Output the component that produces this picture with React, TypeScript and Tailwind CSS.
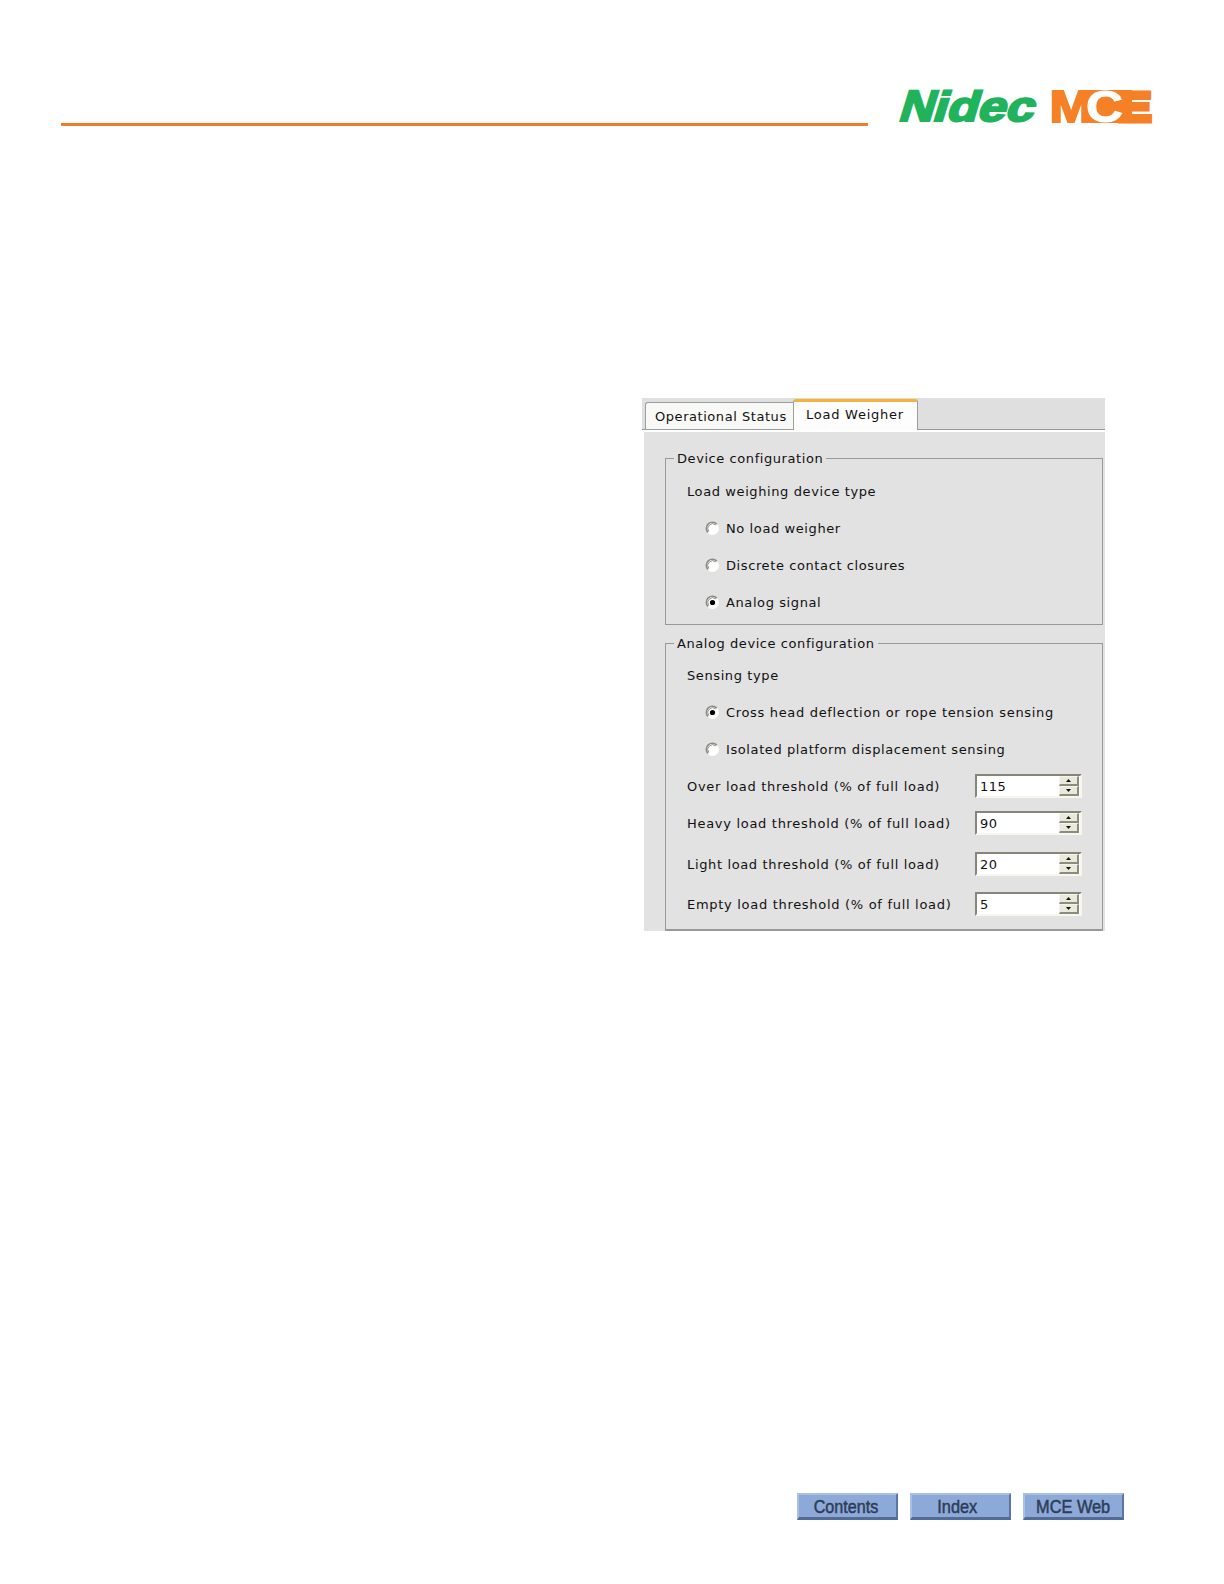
import { twMerge } from "tailwind-merge";

const ORANGE = "#f58026";
const GREEN = "#20b35c";

const NidecLogo = () => (
  <svg width="138" height="34" viewBox="0 0 138 34" className="overflow-visible" fill={GREEN}>
    <g
      transform="translate(0 33) skewX(-17)"
      fontFamily="Liberation Sans"
      fontWeight="bold"
      stroke={GREEN}
      strokeWidth="2.2"
    >
      <text x="-2" y="-0.6" fontSize="44" textLength="35" lengthAdjust="spacingAndGlyphs">N</text>
      <text x="32" y="-0.6" fontSize="42" textLength="101" lengthAdjust="spacingAndGlyphs">idec</text>
    </g>
  </svg>
);

const MceLogo = () => (
  <svg width="100" height="33" viewBox="0 0 100 33" className="overflow-visible" fontFamily="Liberation Sans" fontWeight="bold">
    <rect x="30" width="50" height="33" fill={ORANGE} />
    <text x="-2.5" y="32" fontSize="45" fill={ORANGE} stroke={ORANGE} strokeWidth="2" textLength="43" lengthAdjust="spacingAndGlyphs">M</text>
    <text x="66" y="30.5" fontSize="41" fill={ORANGE} stroke={ORANGE} strokeWidth="5" textLength="33" lengthAdjust="spacingAndGlyphs">E</text>
    <text x="34" y="32.2" fontSize="45" fill="#fff" stroke="#fff" strokeWidth="1" textLength="37" lengthAdjust="spacingAndGlyphs">C</text>
  </svg>
);

interface RadioProps {
  label: string;
  checked?: boolean;
  className?: string;
}

const Radio = ({ label, checked = false, className }: RadioProps) => (
  <div className={twMerge("flex h-[37px] items-center pl-[39px] tracking-[0.6px]", className)}>
    <svg width="15" height="15" viewBox="0 0 15 15" className="mr-[6px] shrink-0">
      <circle cx="7.5" cy="7.5" r="6.5" fill="#fff" />
      <path d="M3 11.5A6 6 0 0 1 11.8 3.2" fill="none" stroke="#8c8c84" strokeWidth="1.6" />
      <path d="M3.8 10.5A4.8 4.8 0 0 1 10.8 4" fill="none" stroke="#55554f" strokeWidth="0.6" />
      {checked && <circle cx="7.5" cy="7.5" r="2.6" fill="#000" />}
    </svg>
    <span className="pt-px">{label}</span>
  </div>
);

const SpinButton = ({ up = false }: { up?: boolean }) => (
  <div className="flex h-[10px] w-[20px] items-center justify-center border-t border-l border-r-2 border-b-2 border-t-[#f5f5ea] border-l-[#f5f5ea] border-r-[#8c8c7c] border-b-[#8c8c7c] bg-[#e9e9dc]">
    <svg width="5" height="3" viewBox="0 0 5 3">
      <path d={up ? "M0 3L2.5 0L5 3Z" : "M0 0L5 0L2.5 3Z"} fill="#111" />
    </svg>
  </div>
);

interface ThresholdProps {
  label: string;
  value: number;
  className?: string;
}

const Threshold = ({ label, value, className }: ThresholdProps) => (
  <div className={twMerge("flex h-[24px] items-center pl-[21px] tracking-[0.7px]", className)}>
    <span className="w-[288px] pt-[2px]">{label}</span>
    <div className="flex h-[24px] w-[107px] items-center justify-between border-2 border-t-[#85857a] border-l-[#85857a] border-r-[#f7f7ef] border-b-[#f7f7ef] bg-white pr-px pl-[3px]">
      <span className="pt-px tracking-[0.5px]">{value}</span>
      <div className="flex flex-col">
        <SpinButton up />
        <SpinButton />
      </div>
    </div>
  </div>
);

interface NavButtonProps {
  label: string;
  className?: string;
}

const NavButton = ({ label, className }: NavButtonProps) => (
  <button
    className="flex h-[27px] w-[101px] items-center justify-center border-t-2 border-l-2 border-r-2 border-b-3 border-t-[#a9c0e4] border-l-[#a9c0e4] border-r-[#5b76a6] border-b-[#526b99] bg-[#8ca9d7]"
  >
    <span className={twMerge("whitespace-nowrap font-['Liberation_Sans'] text-[19px] leading-none text-[#2d3d57] [-webkit-text-stroke:0.5px_#2d3d57]", className)}>
      {label}
    </span>
  </button>
);

const LoadWeigherPanel = () => (
  <div className="h-[533px] w-[463px] overflow-hidden bg-[#e2e2e2] font-['DejaVu_Sans',sans-serif] text-[13px] leading-[16px] whitespace-nowrap text-[#111]">
    <div className="flex h-[32px] items-end bg-[#dfdfdf]">
      <div className="h-px w-[3px] bg-[#999]" />
      <div className="flex h-[28px] w-[148px] items-center rounded-tl-[3px] border-t border-b border-l border-[#999fa0] bg-[#f8f9f6] pl-[9px]">
        <span className="pt-px tracking-[0.55px]">Operational Status</span>
      </div>
      <div className="flex h-[31px] w-[125px] items-center rounded-t-[3px] border-t-[3px] border-r border-l border-t-[#f3b33c] border-r-[#999fa0] border-l-[#999fa0] bg-[#fdfdfd] pb-[3px] pl-[12px]">
        <span className="tracking-[0.75px]">Load Weigher</span>
      </div>
      <div className="h-px flex-1 bg-[#999]" />
    </div>
    <div className="h-[501px] border-t-2 border-l-2 border-white pt-[18px] pl-[21px]">
      <fieldset className="h-[175px] w-[438px] border border-[#999]">
        <legend className="ml-[8px] h-[16px] px-[3px] pt-px tracking-[0.57px]">Device configuration</legend>
        <div className="pt-[18px] pl-[21px] tracking-[0.6px]">Load weighing device type</div>
        <Radio label="No load weigher" className="mt-[10px]" />
        <Radio label="Discrete contact closures" />
        <Radio label="Analog signal" checked />
      </fieldset>
      <fieldset className="mt-[10px] h-[296px] w-[438px] border border-b-2 border-[#999]">
        <legend className="ml-[8px] h-[16px] px-[3px] pt-px tracking-[0.57px]">Analog device configuration</legend>
        <div className="pt-[17px] pl-[21px] tracking-[0.6px]">Sensing type</div>
        <Radio label="Cross head deflection or rope tension sensing" checked className="mt-[10px] tracking-[0.67px]" />
        <Radio label="Isolated platform displacement sensing" />
        <Threshold label="Over load threshold (% of full load)" value={115} className="mt-[6px]" />
        <Threshold label="Heavy load threshold (% of full load)" value={90} className="mt-[13px]" />
        <Threshold label="Light load threshold (% of full load)" value={20} className="mt-[17px] tracking-[0.64px]" />
        <Threshold label="Empty load threshold (% of full load)" value={5} className="mt-[16px]" />
      </fieldset>
    </div>
  </div>
);

const App = () => {
  return (
    <div className="flex h-[1584px] w-[1224px] flex-col bg-white">
      <header className="flex h-[126px] items-end pl-[61px]">
        <div className="h-[3px] w-[807px] bg-[#ec7d2b]" />
        <div className="mb-[3px] ml-[31px]">
          <NidecLogo />
        </div>
        <div className="mb-[3px] ml-[15px]">
          <MceLogo />
        </div>
      </header>
      <main className="mt-[272px] pl-[642px]">
        <LoadWeigherPanel />
      </main>
      <footer className="mt-[562px] flex gap-[12px] pl-[797px]">
        <NavButton label="Contents" className="-ml-[2px] scale-x-[0.85]" />
        <NavButton label="Index" className="-ml-[6px] scale-x-[0.86]" />
        <NavButton label="MCE Web" className="scale-x-[0.86]" />
      </footer>
    </div>
  );
};

export default App;
